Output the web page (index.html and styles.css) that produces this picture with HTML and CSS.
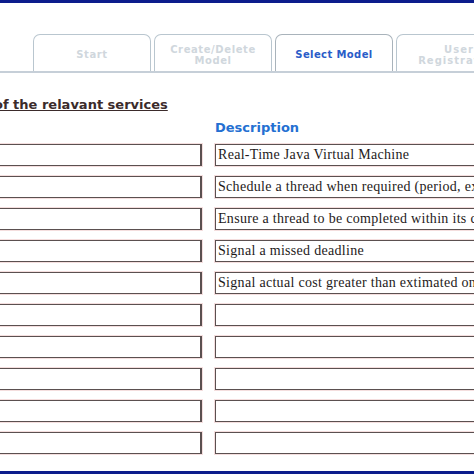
FILE: index.html
```html
<!DOCTYPE html>
<html>
<head>
<meta charset="utf-8">
<link rel="stylesheet" href="styles.css">
</head>
<body>
<div class="topbar"></div>
<div class="tabstrip">
  <div class="tab">Start</div>
  <div class="tab">Create/Delete<br>Model</div>
  <div class="tab active">Select Model</div>
  <div class="tab last">User<br>Registration</div>
</div>
<h2 class="heading">of the relavant services</h2>
<div class="form">
  <div class="colhead"></div>
  <div class="colhead desc">Description</div>
  <div class="field"></div><div class="field">Real-Time Java Virtual Machine</div>
  <div class="field"></div><div class="field">Schedule a thread when required (period, execution)</div>
  <div class="field"></div><div class="field">Ensure a thread to be completed within its deadline</div>
  <div class="field"></div><div class="field">Signal a missed deadline</div>
  <div class="field"></div><div class="field">Signal actual cost greater than extimated one</div>
  <div class="field"></div><div class="field"></div>
  <div class="field"></div><div class="field"></div>
  <div class="field"></div><div class="field"></div>
  <div class="field"></div><div class="field"></div>
  <div class="field"></div><div class="field"></div>
</div>
<div class="bottombar"></div>
</body>
</html>
```

FILE: styles.css
```css
html, body {
  margin: 0;
  padding: 0;
  background: #ffffff;
  width: 474px;
  height: 474px;
  overflow: hidden;
}
body {
  display: flex;
  flex-direction: column;
  font-family: "DejaVu Sans", Verdana, sans-serif;
}
.topbar {
  height: 3px;
  background: #0c1d8c;
  flex: none;
}
.tabstrip {
  margin-top: 31px;
  display: flex;
  gap: 3px;
  padding-left: 33px;
  border-bottom: 2px solid #c6cfd8;
  height: 37px;
  flex: none;
  white-space: nowrap;
}
.tab {
  flex: none;
  width: 118px;
  box-sizing: border-box;
  border: 1px solid #b9c6cf;
  border-bottom: none;
  border-radius: 7px 7px 0 0;
  display: flex;
  align-items: center;
  justify-content: center;
  text-align: center;
  font-size: 10px;
  font-weight: bold;
  letter-spacing: 0.6px;
  line-height: 11px;
  color: #d0d7dd;
  padding-top: 3px;
}
.tab.last {
  padding-left: 8px;
  letter-spacing: 1px;
}
.tab.active {
  color: #2a5cc8;
  border-color: #a9b3bb;
  letter-spacing: 0.4px;
}
.heading {
  margin: 24px 0 0 -6px;
  font-size: 13px;
  font-weight: bold;
  color: #3b2b2b;
  text-decoration: underline;
  line-height: 16px;
  flex: none;
}
.form {
  margin-left: -40px;
  width: 560px;
  display: grid;
  grid-template-columns: 242px 1fr;
  column-gap: 13px;
  row-gap: 10px;
  flex: none;
}
.colhead {
  height: 21px;
  padding-top: 6px;
  line-height: 18px;
  font-size: 13px;
  font-weight: bold;
  color: #2470d2;
  margin-bottom: -6px;
}
.field {
  height: 22px;
  box-sizing: border-box;
  border: 1px solid #5b5050;
  border-right-width: 2px;
  box-shadow: 0 0 0 1px #f4dede;
  font-family: "Liberation Serif", "Times New Roman", serif;
  font-size: 14px;
  letter-spacing: 0.3px;
  line-height: 19px;
  padding-left: 2px;
  color: #1e1a1a;
  white-space: nowrap;
  overflow: hidden;
}
.bottombar {
  margin-top: auto;
  height: 3px;
  background: #0c1d8c;
  flex: none;
}
```
